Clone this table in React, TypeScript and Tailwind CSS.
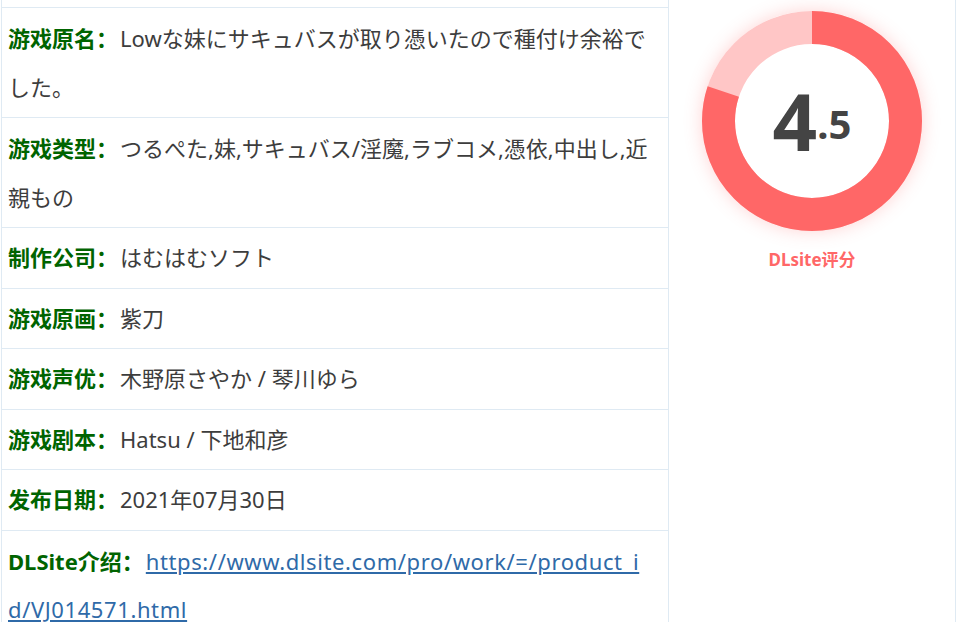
const rows: { label: string; value: string; lines?: number }[] = [
  { label: '游戏原名', value: 'Lowな妹にサキュバスが取り憑いたので種付け余裕でした。', lines: 2 },
  { label: '游戏类型', value: 'つるぺた,妹,サキュバス/淫魔,ラブコメ,憑依,中出し,近親もの', lines: 2 },
  { label: '制作公司', value: 'はむはむソフト' },
  { label: '游戏原画', value: '紫刀' },
  { label: '游戏声优', value: '木野原さやか / 琴川ゆら' },
  { label: '游戏剧本', value: 'Hatsu / 下地和彦' },
  { label: '发布日期', value: '2021年07月30日' },
];

function Row({ label, tall, children }: { label: string; tall?: boolean; children: React.ReactNode }) {
  return (
    <div
      className={
        'border-b border-[#dfeaf3] px-[6px] py-[6px] text-[22px] text-[#3d3d3d] ' +
        (tall ? 'leading-[48.5px]' : 'leading-[47.5px]')
      }
    >
      <span className="mr-[2px] font-bold text-[#006400]">{label}：</span>
      {children}
    </div>
  );
}

function InfoTable() {
  return (
    <div className="ml-px w-[668px] shrink-0 border-x border-[#dfeaf3]">
      <div className="h-[8px] border-b border-[#dfeaf3]" />
      {rows.map((r) => (
        <Row key={r.label} label={r.label} tall={r.lines === 2}>
          {r.value}
        </Row>
      ))}
      <Row label="DLSite介绍" tall>
        <a href="#" className="tracking-[0.6px] text-[#2f6aa8] underline">
          https://www.dlsite.com/pro/work/=/product_i
          <br />
          d/VJ014571.html
        </a>
      </Row>
    </div>
  );
}

function ScoreRing({ score }: { score: number }) {
  const r = 93.5;
  const c = 2 * Math.PI * r;
  const filled = c * 0.8;
  const [whole, frac] = score.toFixed(1).split('.');
  return (
    <div className="relative h-[220px] w-[220px] rounded-full shadow-[0_0_18px_rgba(255,102,102,0.28)]">
      <svg width="220" height="220" viewBox="0 0 220 220" className="-rotate-90">
        <circle cx="110" cy="110" r={r} fill="none" stroke="#ffc6c6" strokeWidth="33" />
        <circle
          cx="110"
          cy="110"
          r={r}
          fill="none"
          stroke="#ff6767"
          strokeWidth="33"
          strokeDasharray={`${filled} ${c}`}
        />
      </svg>
      <div className="absolute inset-0 flex items-center justify-center">
        <div className="font-bold leading-none text-[#444]">
          <span className="text-[78px]">{whole}</span>
          <span className="align-[12px] text-[40px]">.{frac}</span>
        </div>
      </div>
    </div>
  );
}

export default function App() {
  return (
    <div
      className="flex h-[622px] w-[957px] overflow-hidden bg-white"
      style={{ fontFamily: '"Noto Sans", "Noto Sans CJK SC", sans-serif' }}
    >
      <InfoTable />
      <div className="flex w-[287px] shrink-0 flex-col items-center border-r border-[#dfeaf3] pt-[11px]">
        <ScoreRing score={4.5} />
        <div className="mt-[16px] text-[17px] font-bold text-[#ff6767]">DLsite评分</div>
      </div>
    </div>
  );
}
